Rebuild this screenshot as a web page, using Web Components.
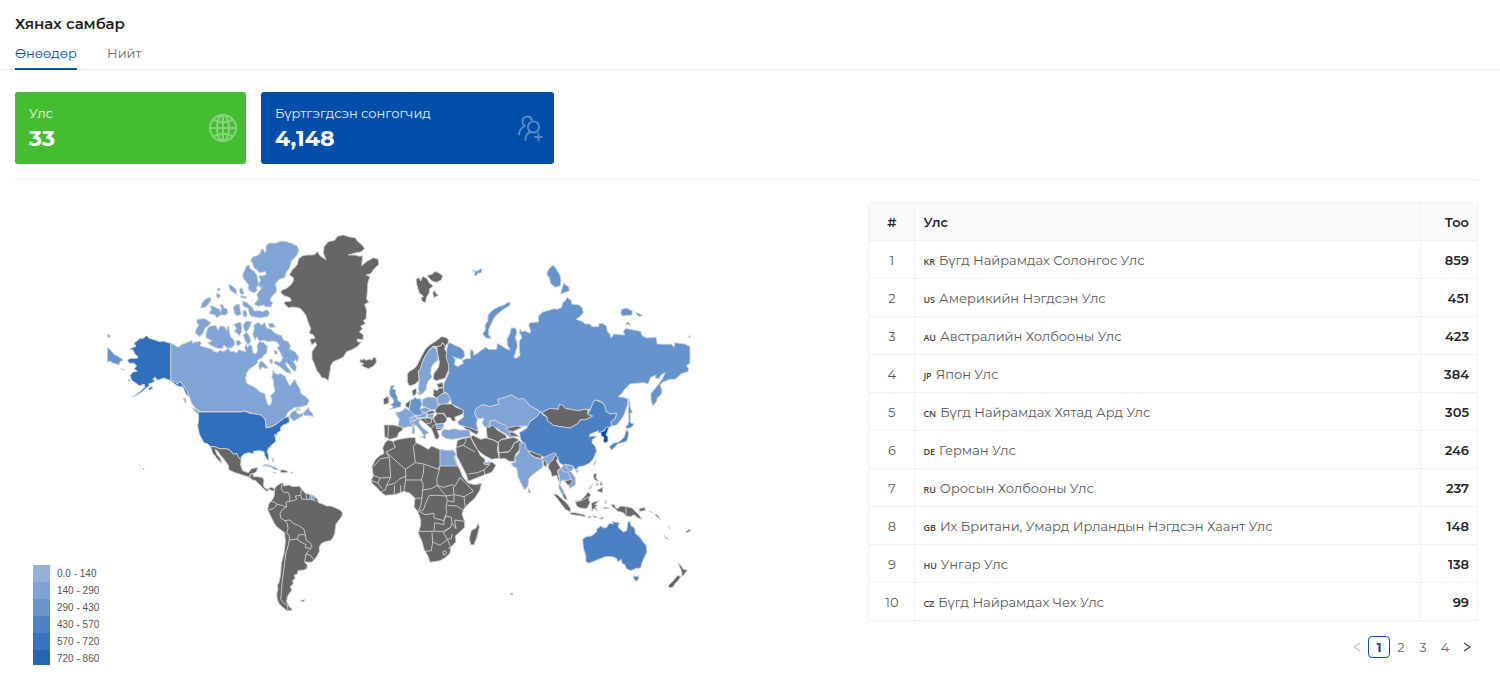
<!DOCTYPE html>
<html lang="mn">
<head>
<meta charset="utf-8">
<title>Хянах самбар</title>
<style>
body{margin:0;background:#fff;color:#262626;font:13px/22px Montserrat,Inter,"Noto Sans",sans-serif}
</style>
</head>
<body>
<dashboard-page></dashboard-page>

<template id="t-page">
<style>
:host{display:block}
main{padding:22px 22px 0 15px}
.cards{display:flex;gap:15px;padding-bottom:15px;border-bottom:1px solid #f0f0f0}
.cols{display:grid;grid-template-columns:7fr 5fr;padding-top:22px}
stat-card:nth-child(1){width:231px}
stat-card:nth-child(2){width:293px}
</style>
<page-header>Хянах самбар</page-header>
<main>
<div class="cards">
<stat-card label="Улс" value="33" style="--bg:#45bd33">
<svg slot="icon" width="28" height="28" viewBox="0 0 28 28" fill="none" stroke="#fff" stroke-width="2" aria-hidden="true"><circle cx="14" cy="14" r="13"/><ellipse cx="14" cy="14" rx="6" ry="13"/><path d="M14 1v26M1 14h26M4 5.500Q14 11 24 5.500M4 22.500Q14 17 24 22.500"/></svg>
</stat-card>
<stat-card label="Бүртгэгдсэн сонгогчид" value="4,148" style="--bg:#004eaa;--end:11px">
<svg slot="icon" width="25" height="27" viewBox="0 0 25 27" fill="none" stroke="#fff" stroke-width="1.9" stroke-linecap="round" aria-hidden="true"><circle cx="15.500" cy="12" r="5.600"/><path d="M7.500 25c0-4 2-7 5-8M14 4.800C12-.5 4.200 1 4.500 6.800c.1 2 1 3.400 2.300 4.200C3 13 1 16 1 19.500M17 22h7M20.500 18.500v7"/></svg>
</stat-card>
</div>
<div class="cols"><world-map></world-map><country-table></country-table></div>
</main>
</template>

<template id="t-header">
<style>
:host{display:block;padding:12px 15px 0;border-bottom:1px solid #ececec}
h1{margin:0;font-size:15px;line-height:24px;font-weight:600;color:#1f1f1f}
nav{display:flex;gap:30px;margin-bottom:-1px}
a{height:34px;box-sizing:border-box;padding-top:6px;color:#6d6d6d;text-decoration:none;border-bottom:2px solid transparent}
a[aria-current]{color:#0b50ab;border-color:#0b50ab}
</style>
<h1><slot></slot></h1>
<nav><a href="#today" aria-current="page">Өнөөдөр</a><a href="#all">Нийт</a></nav>
</template>

<template id="t-card">
<style>
:host{display:flex;box-sizing:border-box;height:72px;padding:9px var(--end,9px) 9px 14px;align-items:center;justify-content:space-between;border-radius:3px;background:var(--bg);color:#fff}
.label{line-height:22px;opacity:.9}
.value{font-size:22px;line-height:30px;font-weight:700}
::slotted(svg){opacity:.35;display:block}
</style>
<div><div class="label"></div><div class="value"></div></div><slot name="icon"></slot>
</template>

<template id="t-table">
<style>
:host{display:block;padding-bottom:7px}
table{width:100%;border-collapse:separate;border-spacing:0;table-layout:fixed;border:1px solid #f0f0f0;border-bottom:0;border-right:0;border-radius:4px 4px 0 0}
th,td{box-sizing:border-box;height:38px;padding:0 8px;border-right:1px solid #f0f0f0;border-bottom:1px solid #f0f0f0;text-align:left;font-weight:400;color:#595959;white-space:nowrap}
th{background:#fafafa;color:#262626;font-weight:600}
th:first-child,td:first-child{width:46px;text-align:center}
th:last-child,td:last-child{width:57px;text-align:right;font-weight:600;color:#262626}
small{font:600 9px "Open Sans","Noto Sans",sans-serif;margin-right:4px;color:#404040}
</style>
<table><thead><tr><th>#</th><th>Улс</th><th>Тоо</th></tr></thead><tbody></tbody></table>
<page-nav></page-nav>
</template>

<template id="t-nav">
<style>
:host{display:block;padding-top:15px}
nav{display:flex;justify-content:flex-end}
button{box-sizing:border-box;width:22px;height:22px;padding:0;border:1px solid transparent;border-radius:4px;background:none;font:inherit;line-height:20px;color:#666}
button[aria-current]{border-color:#0b50ab;color:#0b50ab;font-weight:700}
button svg{display:block;margin:auto;fill:none;stroke:#444;stroke-width:1.2}
button:disabled svg{stroke:#c4c4c4}
</style>
<nav aria-label="Хуудас">
<button disabled aria-label="Өмнөх"><svg width="10" height="10"><path d="M8 1 2 5l6 4"/></svg></button>
<button aria-current="page">1</button><button>2</button><button>3</button><button>4</button>
<button aria-label="Дараах"><svg width="10" height="10"><path d="m2 1 6 4-6 4"/></svg></button>
</nav>
</template>

<template id="t-map">
<style>
:host{display:grid;grid-template-columns:74px minmax(0,584px);align-items:end;padding-left:18px}
ul{list-style:none;margin:0;padding:0;font:10px/17px "Liberation Sans",Arial,sans-serif;color:#555;display:grid;grid-template-rows:repeat(6,1fr);height:100px}
li{display:flex;align-items:center;gap:7px;white-space:nowrap}
i{width:17px;align-self:stretch}
.map{display:block;width:100%;height:auto;margin-bottom:50px}
path{stroke:#ccd1d6;stroke-width:.9;vector-effect:non-scaling-stroke;stroke-linejoin:round;fill:#666}
.a{fill:#80a4d6}.b{fill:#6593ce}.c{fill:#4b80c4}.d{fill:#306fbb}.e{fill:#0049a9}.n{fill:none}
</style>
<ul>
<li><i style="background:#93b2da"></i>0.0 - 140</li>
<li><i style="background:#7fa2d7"></i>140 - 290</li>
<li><i style="background:#6894ce"></i>290 - 430</li>
<li><i style="background:#4c83c8"></i>430 - 570</li>
<li><i style="background:#3774bf"></i>570 - 720</li>
<li><i style="background:#2465b5"></i>720 - 860</li>
</ul>
<svg class="map" viewBox="107 225 584 390" role="img" aria-label="Дэлхийн газрын зураг">
<!-- North America -->
<g transform="translate(100 225) scale(.33333)">
<path class="a" d="M212,355L222,359 232,366 240,364 245,358 258,354 268,350 275,346 279,356 284,350 291,352 298,348 304,354 300,362 312,366 328,370 340,374 338,379 352,382 360,376 370,380 385,370 392,380 400,378 410,384 416,374 438,380 434,368 438,356 443,368 449,358 455,362 460,385 468,387 473,375 471,362 477,350 490,352 502,364 500,385 492,390 485,400 472,405 474,412 466,420 448,432 440,444 437,460 440,475 455,482 468,490 478,500 495,506 497,520 503,538 510,542 516,528 512,512 524,500 524,490 520,480 521,468 515,455 520,442 532,448 542,446 556,454 560,466 570,483 576,475 585,462 590,476 600,492 603,506 616,514 627,526 622,540 600,546 582,548 564,562 557,576 541,588 530,596 516,604 498,608 496,585 490,576 480,570 460,566 435,558 420,560 302,560 285,548 275,535 268,515 262,500 250,482 244,474 240,470 232,478 224,470 212,466Z"/>
<path class="a" d="M568,575L574,562 598,550 588,560 596,568 612,564 606,574 592,582 580,588 575,582ZM608,566L618,556 626,546 628,556 638,566 640,575 630,572 614,572ZM276,548L290,554 300,562 302,574 288,562ZM250,520L257,519 258,534 254,532ZM588,550L604,554 596,556Z"/>
<path class="a" d="M455,100L462,94 472,92 480,86 484,73 490,73 494,84 498,78 498,62 508,54 525,55 545,48 560,50 575,55 590,62 597,74 592,88 583,100 574,108 572,118 568,130 559,142 554,158 540,162 532,168 526,178 530,190 528,202 515,215 510,225 518,235 512,246 498,246 490,240 476,244 462,238 475,222 470,208 480,196 484,188 474,180 482,165 475,153 490,152 498,148 497,140 478,143 472,136 462,128 458,115 452,108Z"/>
<path class="a" d="M440,122L448,120 450,131 462,138 470,150 474,165 476,182 470,187 472,198 462,203 450,198 444,190 446,180 440,172 430,160 428,150 432,140ZM428,228L440,232 448,240 458,248 462,258 480,257 488,260 500,254 508,262 505,275 492,276 480,279 465,276 455,275 447,264 445,250 434,246 428,240ZM387,178L398,184 410,196 410,208 396,200 388,192ZM420,188L426,190 432,204 426,210 419,202ZM420,212L432,214 442,216 436,220 424,218ZM352,190L360,190 362,195 352,197ZM348,208L358,206 362,214 352,220ZM302,248L306,234 316,222 330,217 333,226 325,238 314,248ZM328,266L334,252 330,242 340,244 350,250 358,252 362,262 364,250 360,238 370,240 372,250 380,250 384,262 378,270 362,270 350,279 346,270 336,268ZM400,246L410,238 418,238 420,252 424,268 412,272 404,266ZM428,258L437,256 441,268 440,276 430,274Z"/>
<path class="a" d="M292,283L315,281 322,286 332,293 326,302 316,308 310,322 300,335 286,325 288,314 296,300 290,292ZM318,325L325,306 338,302 348,302 354,316 362,302 374,306 380,316 382,304 387,306 388,322 392,335 402,346 405,358 396,368 382,370 372,360 368,370 352,370 338,364 322,354 336,348 318,338ZM402,298L412,294 422,292 426,306 424,322 418,332 410,324 402,318 410,312ZM430,298L440,288 455,290 452,300 446,312 438,322 432,312ZM430,330L440,322 450,336 452,350 444,360 436,348ZM408,348L418,346 424,356 412,364ZM504,296L518,294 526,306 510,308Z"/>
<path class="a" d="M462,300L475,292 484,300 494,293 500,310 512,312 525,325 545,332 550,345 565,350 572,364 568,372 585,380 596,396 592,412 586,404 580,410 590,426 586,440 575,432 566,418 556,412 560,424 570,436 572,446 556,440 544,428 522,414 524,408 540,412 548,400 540,380 532,370 538,360 530,350 518,348 505,350 490,346 478,348 470,335 466,346 458,328 462,316ZM523,376L531,378 532,388 524,387ZM478,412L486,408 498,420 504,430 494,430 488,426 480,434 476,424ZM508,404L516,402 518,414 512,416ZM516,440L522,436 524,444Z"/>
<path class="d" d="M140,332L148,340 165,345 180,350 190,348 200,352 212,355 212,466 204,464 190,459 178,464 170,465 166,457 158,462 165,468 156,474 146,476 148,482 135,492 124,502 115,508 96,517 120,500 135,486 133,478 118,482 108,475 95,465 90,452 98,442 112,438 102,432 110,422 100,414 88,415 82,405 92,400 112,400 114,395 104,386 100,376 88,372 98,368 108,364 102,354 112,348 120,340 130,340ZM146,490L156,484 158,490 148,496ZM212,466L224,470 232,478 240,470 250,482 262,500 266,516 258,507 248,485 232,483 218,472ZM84,464L92,466 88,470Z"/>
<path class="b" d="M22,366L34,378 42,388 50,392 60,398 70,405 60,410 58,420 46,416 38,414 30,408 22,412ZM22,328L33,333 24,338ZM62,430L76,435 66,433Z"/>
</g>
<g transform="translate(180 400) scale(.33333)">
<path class="d" d="M55,36L180,36 195,34 210,40 225,42 240,44 250,52 256,60 258,84 275,80 290,72 300,64 316,52 327,50 328,66 318,72 308,76 302,82 302,92 292,98 290,108 284,102 286,114 288,124 276,134 265,145 262,155 266,168 266,182 260,176 254,166 252,155 240,152 220,154 222,162 206,158 192,162 184,170 183,180 174,170 170,160 160,163 150,150 138,146 118,146 104,140 92,140 84,132 72,128 64,114 58,102 55,88 53,78 56,60Z"/>
<path d="M92,140L104,140 118,146 138,146 150,150 160,163 170,160 174,170 183,180 182,195 188,212 205,218 215,206 233,202 230,214 222,220 212,222 208,232 190,226 178,222 165,218 147,210 145,196 136,184 130,175 120,164 112,152 105,148 112,165 120,174 126,190 118,184 108,172 104,166 98,160ZM208,232L214,222 220,220 220,230 232,230 248,233 252,240 250,255 254,264 262,268 272,262 285,266 280,274 268,268 260,274 248,264 242,256 236,252 228,242 218,240Z"/>
<path class="a" d="M246,198L256,193 270,196 282,200 296,209 284,209 274,202 260,198Z"/>
<path d="M300,212L308,209 320,212 324,217 312,218 302,217ZM278,217L287,217 286,220ZM330,216L338,217 336,220ZM276,174L281,176 280,188Z"/>
<path d="M285,264L292,256 305,249 312,250 310,258 325,255 340,260 358,258 364,266 376,280 392,284 405,290 412,298 415,308 428,312 440,318 452,318 468,324 480,330 487,338 486,348 476,362 468,372 466,388 464,402 458,414 452,422 438,424 425,430 418,440 418,455 410,470 400,482 394,487 374,486 382,496 380,506 372,510 354,512 352,522 342,526 346,534 338,542 340,552 330,560 336,570 328,580 322,590 320,605 328,620 338,630 322,633 308,622 298,612 292,600 290,584 294,568 292,556 298,545 302,520 304,490 312,460 316,425 314,398 300,388 290,380 282,368 275,355 268,340 263,330 266,312 276,300 282,290Z"/>
<path class="n" d="M307,252L303,266 310,276 325,278 330,292 328,304 318,306 320,320 306,330 300,340 302,354 314,362 330,360 340,370 358,378 372,388 376,404 378,420 392,430 396,442 386,452 378,462 392,466 400,478M328,304L340,302 350,298 346,288 362,286 364,268M362,286L366,298 378,298 392,298 408,302M378,282L380,298M392,284L388,298M272,304L284,306 290,312 304,316 320,320M266,330L280,326 288,318 290,312M314,362L322,370 324,385 320,398 328,408 328,420 342,418 352,418 356,404 376,404M352,418L366,428 378,434 376,444 392,444M378,462L374,486M328,420L324,440 318,458 314,490 310,520 306,550 304,580 302,598 312,610 322,614 324,632"/>
<path class="a" d="M393,284L405,290 402,298 394,298Z"/>
<path d="M360,602L368,600 376,599 370,605ZM-122,195L-118,198ZM-112,205L-107,208 -112,208Z"/>
</g>
<!-- Greenland and North Atlantic -->
<g transform="translate(260 225) scale(.33333)">
<path d="M62,203L66,195 80,190 92,180 100,168 100,158 88,150 96,136 104,128 112,118 115,102 128,92 142,90 157,90 165,88 172,80 180,92 198,104 190,85 192,65 205,50 224,46 232,34 250,30 268,36 285,38 294,50 306,60 314,70 304,80 285,84 265,90 286,90 298,94 308,92 305,122 322,108 340,98 354,102 357,118 342,132 332,146 318,150 330,155 324,172 322,200 320,222 326,232 314,238 320,256 318,282 310,286 316,296 302,304 308,312 298,320 310,330 309,345 292,342 292,350 304,352 290,366 276,374 260,380 250,396 234,404 220,410 212,422 210,440 205,467 196,460 185,458 178,446 170,436 162,414 156,402 156,380 170,360 166,352 155,360 150,342 165,340 160,330 148,325 152,310 144,290 138,272 130,260 120,250 100,246 85,248 72,235 76,230 94,228 90,218 72,212Z"/>
<path d="M300,402L308,406 310,400 318,406 330,402 334,406 342,396 348,400 349,412 340,424 325,431 312,426 304,420 312,416 300,412ZM468,162L478,158 482,168 488,154 500,160 508,174 520,183 508,192 508,204 500,216 496,234 486,228 484,220 490,214 478,204 474,192 470,178ZM501,152L518,147 522,140 534,142 548,152 544,165 530,172 516,168ZM518,204L524,196 528,206 536,210 522,218Z"/>
</g>
<!-- Russia, Central and East Asia -->
<g transform="translate(470 250) scale(.33333)">
<path class="b" d="M-66,282L-60,278 -46,286 -30,292 -18,304 -15,318 -26,328 -42,324 -52,320 -44,328 -46,344 -36,350 -28,344 -20,340 -24,332 -12,326 2,326 0,312 2,298 12,306 10,316 22,310 34,300 48,292 56,298 80,298 82,280 96,288 108,296 120,300 112,284 111,268 120,250 124,233 138,235 140,248 136,264 140,274 142,290 132,322 140,325 150,316 148,296 148,274 156,262 149,248 150,236 156,246 164,242 180,250 182,242 176,226 180,218 205,216 206,198 218,186 240,180 252,176 262,178 275,172 278,158 286,152 292,142 304,152 304,162 325,164 336,172 340,188 330,200 318,208 336,214 345,222 360,222 366,230 385,230 388,220 402,222 410,230 412,245 420,252 423,264 432,252 465,255 460,244 467,235 490,240 512,244 516,256 530,264 558,262 562,282 590,283 604,282 612,292 614,278 628,280 645,282 660,290 660,340 650,346 657,360 652,366 636,370 615,388 600,388 580,395 570,404 576,420 575,432 562,444 560,454 548,468 543,450 543,430 556,415 566,402 575,390 586,368 574,374 566,386 556,384 558,376 542,382 534,402 520,398 480,402 466,416 455,430 445,440 462,442 474,448 472,465 464,490 454,508 440,525 425,528 422,516 434,508 440,490 420,492 408,484 405,470 398,458 388,452 375,450 368,460 362,478 345,478 325,482 310,480 285,475 278,466 268,463 265,478 240,475 215,488 200,478 180,468 172,458 160,445 145,448 125,435 105,442 82,448 88,462 60,470 38,464 20,474 14,490 22,508 20,522 24,540 10,542 -15,530 -32,525 -38,516 -20,502 -20,490 -30,475 -55,462 -58,450 -68,430 -80,425 -78,400 -64,370 -64,360 -72,320 -70,300Z"/>
<path class="b" d="M120,157L120,166 100,178 90,186 76,198 68,212 62,225 56,238 56,254 64,265 48,264 38,252 46,240 45,225 54,212 54,196 66,182 82,172 104,164 112,158ZM248,46L256,52 264,66 270,76 273,92 270,108 255,112 242,100 238,84 230,72 236,58ZM282,98L286,104 296,110 298,122 272,132 276,116ZM455,178L470,174 488,184 485,196 470,196 458,199 452,190ZM496,186L517,196 510,200 502,196ZM466,222L474,216 482,225ZM6,60L18,64 28,60 30,55 35,60 34,68 22,70 20,78 12,74 16,68ZM655,260L660,256 660,264ZM475,443L480,456 480,472 488,488 480,490 482,512 477,514 475,486 476,462Z"/>
<path class="a" d="M14,488L20,474 38,464 60,470 88,462 82,448 105,442 125,435 145,448 160,445 172,458 180,468 200,478 212,486 200,500 180,514 178,528 150,528 136,534 130,540 118,538 105,525 90,520 75,510 60,514 60,530 46,532 36,520 42,505 22,506ZM58,535L58,514 75,510 90,520 105,525 118,538 138,538 128,546 132,560 122,564 108,552 95,545 80,534Z"/>
<path d="M215,488L240,475 265,478 268,463 278,466 285,475 310,480 325,482 345,478 355,480 352,492 368,498 350,508 330,510 325,520 300,534 270,530 250,526 232,512 230,500Z"/>
<path class="c" d="M212,486L220,496 230,500 232,512 250,526 270,530 300,534 325,520 330,510 350,508 368,498 352,492 362,478 368,460 375,450 398,458 405,470 408,484 420,492 440,490 434,508 422,516 425,528 412,534 398,544 384,550 386,542 372,548 360,552 358,560 368,558 382,560 368,568 366,578 376,590 380,604 370,626 358,640 340,648 326,650 318,660 308,648 292,644 280,646 268,638 262,620 250,622 235,625 210,618 190,608 172,602 160,580 152,568 148,548 170,535 180,515 200,500ZM317,660L326,662 320,668Z"/>
<path class="e" d="M392,546L404,542 408,532 416,532 412,546 408,554 414,562 414,574 404,580 400,572 402,562 394,558Z"/>
<path class="c" d="M476,510L484,520 493,522 484,532 472,536 466,530 474,524ZM470,538L476,548 474,562 470,574 456,578 442,582 436,590 424,600 418,590 430,580 446,576 456,568 462,562 466,550Z"/>
</g>
<!-- Europe -->
<g transform="translate(370 330) scale(.33333)">
<path d="M112,132L118,124 132,116 140,108 148,92 156,76 166,58 178,46 190,38 202,30 214,20 226,22 235,28 235,38 226,48 218,38 212,48 200,50 190,48 178,60 165,80 158,95 152,115 145,125 148,150 135,163 118,168 112,155Z"/>
<path class="a" d="M148,150L145,125 152,115 158,95 165,80 178,60 190,50 198,56 203,70 204,90 192,100 184,112 182,130 186,142 174,154 170,166 168,180 158,190 150,195 145,178Z"/>
<path d="M200,50L212,48 218,38 226,48 224,56 230,68 228,80 236,105 236,120 225,145 200,152 190,148 192,130 206,112 208,96 203,70ZM126,182L138,175 140,186 136,196 128,196ZM142,188L148,188 148,196ZM200,162L218,157 220,172 206,174ZM190,178L202,182 206,174 220,174 222,190 214,194 212,204 200,206 190,196Z"/>
<path class="b" d="M62,168L74,166 68,176 78,180 76,190 82,200 84,212 94,218 92,230 78,234 60,238 70,230 62,224 72,216 68,204 62,202 58,188ZM122,210L132,206 134,200 140,206 152,206 156,225 150,234 160,246 152,256 124,256 118,240Z"/>
<path d="M40,208L50,200 57,204 56,220 42,224ZM107,222L120,210 120,225 116,236 106,228ZM42,285L70,285 98,292 98,300 86,308 82,322 60,328 52,324 44,320Z"/>
<path class="a" d="M76,248L94,244 106,234 116,240 134,254 126,264 132,280 132,288 112,290 102,294 84,288 88,268ZM50,200L57,200 58,206ZM157,208L175,201 200,204 205,225 198,238 184,240 168,232 156,226ZM200,204L214,192 228,188 234,194 242,208 232,222 205,224ZM150,236L166,232 182,240 170,248 156,246ZM140,258L152,256 158,248 170,250 168,262 144,264ZM172,256L192,250 188,264 174,264ZM197,282L222,280 220,294 200,296ZM118,262L140,260 138,272 122,274ZM120,276L142,266 152,268 146,278 158,294 178,308 168,312 166,326 150,320 162,318 154,304 138,286 122,282ZM127,290L133,288 133,312 126,310Z"/>
<path d="M204,228L216,222 234,222 245,222 258,232 280,240 278,252 264,258 254,262 258,272 248,274 240,262 230,264 222,250 198,250 196,240ZM170,248L184,242 196,244 190,250 174,254ZM190,264L204,250 220,252 230,264 230,272 222,280 200,282 192,274ZM148,266L172,264 190,266 198,280 200,296 218,294 214,300 202,302 208,318 204,328 196,326 190,310 184,296 168,282 156,272ZM278,288L296,292 312,298 326,304 320,314 308,308 300,302 288,298Z"/>
<path class="n" d="M55,288L54,322M168,282L184,278 184,264M184,296L190,286 198,284M172,276L164,268"/>
<path class="a" d="M214,306L222,298 236,300 252,296 270,300 298,300 302,320 280,322 262,326 246,328 230,326 216,318Z"/>
</g>
<!-- Africa and Middle East -->
<g transform="translate(360 430) scale(.33333)">
<path d="M75,38L84,30 100,34 115,28 140,24 165,22 168,38 185,46 205,58 215,48 238,58 262,62 280,60 288,72 284,80 290,100 300,120 308,140 325,160 345,164 365,160 360,180 345,204 325,222 312,236 306,252 314,275 314,292 300,305 286,318 288,335 272,352 270,370 255,384 240,392 210,397 204,378 192,358 186,335 175,310 182,285 182,270 175,248 162,230 165,205 150,190 132,184 105,194 75,196 62,186 50,172 36,160 34,150 40,138 36,110 45,90 58,78 72,70 68,54Z"/>
<path class="a" d="M240,58L262,62 280,60 288,74 280,80 292,108 240,108Z"/>
<path class="n" d="M98,34L106,52 78,66 88,82 62,86 40,110M88,82L92,142 60,144 40,136M78,66L136,118 166,98 160,50 168,38M166,98L192,102 236,118 238,108M240,108L236,128 230,148 232,166 250,172 278,164 284,170 300,142M192,102L190,130 184,150 190,164 188,180 214,176 232,166M136,118L138,138 120,146 104,160 80,166 92,142M138,150L184,150M138,138L132,184M122,166L122,188M104,166L102,194M80,166L76,180 62,186M60,144L54,160 36,152M54,160L66,176M165,205L186,204 188,180M186,204L182,228 174,244 190,240 200,212 208,196 232,196 258,198 262,212 258,228 260,250 252,272 222,264 222,250 196,254 180,246M232,166L258,198 282,194 280,170M282,194L312,200 340,184 322,164 300,142M312,200L316,232M262,226L290,228 308,240M262,212L282,216 282,194M252,272L256,258 274,262 276,280 288,296 284,270 314,274M174,304L206,304 222,304 224,278 252,284 252,272M222,304L250,304 272,292 276,280M216,308L218,336 214,362 196,364M218,336L240,346 262,328 250,308 272,292M262,328L274,326 276,312M262,328L272,350 264,356M248,366L256,362 260,370 252,376Z"/>
<path d="M288,55L292,32 306,26 332,22 345,45 354,62 362,78 374,86 376,100 396,96 408,106 396,126 370,136 325,154 318,132 304,104 290,78ZM332,20L340,16 362,28 378,24 400,30 415,38 412,60 418,85 395,88 376,78 364,70 350,56 340,40ZM378,-10L388,-8 398,-14 412,0 438,16 440,26 424,28 415,38 400,30 382,24ZM415,38L424,28 440,26 462,22 478,30 462,40 456,54 445,66 416,68ZM418,68L445,66 456,54 462,40 478,32 488,40 478,60 466,74 464,94 448,94 436,86 416,86ZM436,-4L466,-12 488,-10 474,-2 460,4 448,2ZM446,6L462,8 478,20 452,18ZM355,280L358,292 350,324 342,345 332,344 328,325 334,302 348,294ZM450,490L458,490 456,496ZM505,174L512,186 506,188Z"/>
<path class="a" d="M370,98L382,98 390,92 388,104 374,104Z"/>
<path class="n" d="M290,52L310,46 318,32 316,26M310,46L345,66M325,132L352,128 372,120 388,104M372,120L374,134"/>
</g>
<!-- South Asia and Oceania -->
<g transform="translate(480 400) scale(.33333)">
<path class="a" d="M93,190L108,186 104,174 118,156 120,138 118,130 134,128 140,148 152,164 168,174 186,178 192,172 210,164 222,158 230,162 218,180 210,190 204,194 196,186 188,182 188,202 174,212 158,224 146,236 144,258 134,270 124,252 114,230 110,204 100,200Z"/>
<path d="M148,152L166,160 184,166 184,176 166,172 150,162ZM190,182L200,184 200,200 190,196ZM208,190L218,180 226,166 234,172 230,184 242,204 232,212 238,236 236,246 230,226 216,230 212,214 204,202Z"/>
<path class="a" d="M234,212L244,204 254,192 262,196 276,196 280,206 272,214 286,234 286,254 268,266 266,254 256,248 254,240 244,242 240,254 250,272 256,286 246,284 236,262 240,240Z"/>
<path class="n" d="M244,204L250,216 264,216 272,234 272,240M254,192L262,206 270,216"/>
<path d="M254,242L276,238 276,250 264,256ZM246,278L256,284 262,300 252,296ZM220,282L232,284 250,300 264,314 272,326 270,336 256,328 244,312 232,296ZM270,338L286,338 304,342 316,346 314,350 292,346 274,344ZM286,304L300,302 314,290 324,276 332,284 326,296 330,308 320,326 300,324 290,318ZM334,310L342,306 358,302 344,314 354,316 346,320 352,334 342,324 336,334ZM322,350L334,350 328,354ZM338,348L354,350 344,354ZM358,356L372,350 366,358ZM366,322L388,324 376,327ZM376,300L380,304 378,312ZM392,314L404,314 406,322 412,326 422,318 440,320 456,324 466,334 476,344 486,358 474,354 462,344 452,350 438,348 430,338 414,334 400,322ZM478,326L494,322 496,332 478,334ZM346,180L346,190 341,196ZM342,220L350,222 348,234 356,244 344,240 341,230ZM360,266L368,262 368,278 360,276 350,272ZM350,248L356,252 350,258ZM362,244L368,254 360,256ZM326,266L338,252 332,264ZM508,334L518,338ZM524,342L534,346 542,358 530,350ZM564,378L570,388ZM552,406L566,418 558,416ZM616,396L628,388 632,392 620,398Z"/>
<path class="n" d="M438,320V348M288,304L306,302 326,290"/>
<path class="c" d="M308,418L318,410 334,408 350,396 350,388 362,378 372,384 380,382 388,370 400,372 396,365 418,368 414,382 430,396 440,392 444,366 448,362 454,378 464,384 466,400 480,412 488,424 498,436 501,456 492,474 486,488 482,504 466,506 452,512 440,506 434,494 426,490 424,478 414,486 410,476 398,470 376,470 356,478 342,484 326,490 317,484 318,468 310,444ZM459,526L468,530 477,527 474,540 467,544 462,536Z"/>
<path d="M594,488L604,498 610,508 622,510 614,522 604,530 606,518 602,508ZM594,526L602,530 596,540 586,550 580,560 570,564 564,558 578,544Z"/>
</g>
</svg>
</template>

<script>
const stamp = (host, id) => {
  const root = host.attachShadow({mode: "open"});
  root.append(document.getElementById(id).content.cloneNode(true));
  return root;
};
const define = (name, id, setup) => customElements.define(name, class extends HTMLElement {
  connectedCallback() {
    if (this.shadowRoot) return;
    const root = stamp(this, id);
    if (setup) setup(root, this);
  }
});
const countries = [
  ["KR", "Бүгд Найрамдах Солонгос Улс", 859],
  ["US", "Америкийн Нэгдсэн Улс", 451],
  ["AU", "Австралийн Холбооны Улс", 423],
  ["JP", "Япон Улс", 384],
  ["CN", "Бүгд Найрамдах Хятад Ард Улс", 305],
  ["DE", "Герман Улс", 246],
  ["RU", "Оросын Холбооны Улс", 237],
  ["GB", "Их Британи, Умард Ирландын Нэгдсэн Хаант Улс", 148],
  ["HU", "Унгар Улс", 138],
  ["CZ", "Бүгд Найрамдах Чех Улс", 99]
];
define("page-header", "t-header");
define("stat-card", "t-card", (root, el) => {
  root.querySelector(".label").textContent = el.getAttribute("label");
  root.querySelector(".value").textContent = el.getAttribute("value");
});
define("world-map", "t-map");
define("page-nav", "t-nav");
define("country-table", "t-table", root => {
  root.querySelector("tbody").innerHTML = countries.map(([code, name, n], i) =>
    `<tr><td>${i + 1}</td><td><small>${code}</small>${name}</td><td>${n}</td></tr>`).join("");
});
define("dashboard-page", "t-page");
</script>
</body>
</html>
